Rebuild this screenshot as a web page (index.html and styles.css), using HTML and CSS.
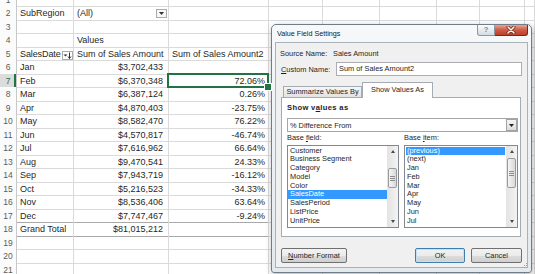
FILE: index.html
```html
<!DOCTYPE html>
<html lang="en">
<head>
    <meta charset="UTF-8">
    <meta name="viewport" content="width=device-width, initial-scale=1.0">
    <title>PivotTable - Value Field Settings</title>
    <link rel="stylesheet" href="styles.css">
</head>
<body>
    <div class="sheet" id="sheet"></div>

    <div class="dialog">
        <div class="titlebar">
            <span class="title">Value Field Settings</span>
            <div class="caption-btns">
                <span class="cap-help">?</span>
                <span class="cap-close">
                    <svg width="10" height="8" viewBox="0 0 10 8">
                        <path d="M2 1l6 6M8 1L2 7" stroke="#6b2418" stroke-width="3" stroke-linecap="round"/>
                        <path d="M2 1l6 6M8 1L2 7" stroke="#fff" stroke-width="1.5" stroke-linecap="round"/>
                    </svg>
                </span>
            </div>
        </div>

        <div class="client">
            <div class="src-row">
                <span class="src-label">Source Name:</span>
                <span>Sales Amount</span>
            </div>
            <div class="name-row">
                <label class="name-label"><u>C</u>ustom Name:</label>
                <div class="textbox">Sum of Sales Amount2</div>
            </div>

            <div class="tabs">
                <div class="tab">Summarize Values By</div>
                <div class="tab active">Show Values As</div>
            </div>
            <div class="panel">
                <div class="group-title">Show v<u>a</u>lues as</div>
                <div class="combo">
                    <span class="combo-text">% Difference From</span>
                    <span class="combo-btn">
                        <svg width="5" height="3" viewBox="0 0 5 3"><path d="M0 0h5L2.5 3z" fill="#222"/></svg>
                    </span>
                </div>

                <div class="lists">
                    <div class="field-col">
                        <div class="list-label">Base <u>f</u>ield:</div>
                        <div class="listbox">
                            <div class="items">
                                <div class="item">Customer</div>
                                <div class="item">Business Segment</div>
                                <div class="item">Category</div>
                                <div class="item">Model</div>
                                <div class="item">Color</div>
                                <div class="item sel">SalesDate</div>
                                <div class="item">SalesPeriod</div>
                                <div class="item">ListPrice</div>
                                <div class="item">UnitPrice</div>
                            </div>
                            <div class="vscroll">
                                <span class="arrow up"></span>
                                <span class="thumb field-thumb"></span>
                                <span class="arrow down"></span>
                            </div>
                        </div>
                    </div>
                    <div class="item-col">
                        <div class="list-label">Base <u>i</u>tem:</div>
                        <div class="listbox">
                            <div class="items">
                                <div class="item sel">(previous)</div>
                                <div class="item">(next)</div>
                                <div class="item">Jan</div>
                                <div class="item">Feb</div>
                                <div class="item">Mar</div>
                                <div class="item">Apr</div>
                                <div class="item">May</div>
                                <div class="item">Jun</div>
                                <div class="item">Jul</div>
                            </div>
                            <div class="vscroll">
                                <span class="arrow up"></span>
                                <span class="thumb item-thumb"></span>
                                <span class="arrow down"></span>
                            </div>
                        </div>
                    </div>
                </div>
            </div>

            <div class="buttons">
                <button class="btn numfmt"><u>N</u>umber Format</button>
                <button class="btn ok">OK</button>
                <button class="btn cancel">Cancel</button>
            </div>
        </div>

        <span class="grip">
            <svg width="7" height="7" viewBox="0 0 7 7" fill="#9aa3ad">
                <rect x="5" y="1" width="1" height="1"/>
                <rect x="3" y="3" width="1" height="1"/>
                <rect x="5" y="3" width="1" height="1"/>
                <rect x="1" y="5" width="1" height="1"/>
                <rect x="3" y="5" width="1" height="1"/>
                <rect x="5" y="5" width="1" height="1"/>
            </svg>
        </span>
    </div>

    <script src="script.js"></script>
</body>
</html>
```

FILE: styles.css
```css
* {
    margin: 0;
    padding: 0;
    box-sizing: border-box;
}

body {
    width: 535px;
    height: 274px;
    overflow: hidden;
    position: relative;
    background-color: white;
    font-family: "Liberation Sans", Arial, sans-serif;
}

/* worksheet */

.sheet {
    margin-top: -7.5px;
    font-size: 9px;
    color: #1f1f1f;
}

.row {
    display: grid;
    grid-template-columns: 17px 57px 95px 100px 54px 57px 57px 43px 45px 10px;
    height: 13.5px;
}

.rh {
    color: #5c5c5c;
    font-size: 8.5px;
    text-align: center;
    line-height: 11.5px;
    padding-top: 2px;
    background-color: #fbfbfb;
    border-right: 1px solid #c8c8c8;
    border-bottom: 1px solid #e2e2e2;
}

.rh.active {
    background-color: #dcdcdc;
    color: #217346;
    box-shadow: inset -2px 0 #217346;
}

.cell {
    position: relative;
    padding: 2px 3px 0;
    line-height: 11.5px;
    white-space: nowrap;
    overflow: hidden;
    border-right: 1px solid #dadada;
    border-bottom: 1px solid #dadada;
}

.cell.num {
    text-align: right;
}

.cell.cur {
    padding-right: 5px;
}

.cell.pivot-line {
    border-bottom-color: #a9a9a9;
}

.cell.filtered {
    letter-spacing: -0.1px;
}

.cell.selected {
    overflow: visible;
    z-index: 1;
}

.cell.selected::before {
    content: "";
    position: absolute;
    left: -2px;
    top: -1px;
    right: -1px;
    bottom: -1px;
    border: 2px solid #217346;
}

.cell.selected::after {
    content: "";
    position: absolute;
    right: -4px;
    bottom: -4px;
    width: 6px;
    height: 6px;
    background-color: #217346;
    border: 1px solid white;
}

.cell-btn {
    position: absolute;
    right: 1px;
    display: flex;
    align-items: center;
    justify-content: center;
    border: 1px solid #ababab;
    background-color: #f7f7f7;
}

.dropdown-btn {
    top: 3px;
    width: 11px;
    height: 9px;
}

.filter-btn {
    top: 4px;
    right: 0;
    width: 11px;
    height: 9px;
    background-color: white;
}

/* dialog window */

.dialog {
    position: absolute;
    left: 271px;
    top: 24px;
    width: 261px;
    height: 249px;
    padding: 0 3px 4px;
    border: 1px solid #6f7c89;
    border-radius: 5px 5px 3px 3px;
    background: linear-gradient(#f6f8fa, #e4e9ee);
    box-shadow: 1px 2px 6px rgba(0, 0, 0, 0.3);
    font-size: 7.4px;
    color: #1e1e1e;
}

.titlebar {
    display: flex;
    height: 17px;
}

.title {
    margin-left: 2px;
    padding-top: 4px;
    line-height: 10px;
    font-size: 7.2px;
    color: #1a1a1a;
}

.caption-btns {
    margin-left: auto;
    display: flex;
    height: 11px;
}

.cap-help {
    width: 18px;
    text-align: center;
    line-height: 10px;
    font-size: 7.5px;
    font-weight: bold;
    color: #7d8894;
    background: linear-gradient(#fafbfc, #d5dce4);
    border: 1px solid #8b97a3;
    border-top: none;
    border-radius: 0 0 0 3px;
}

.cap-close {
    width: 33px;
    display: flex;
    align-items: center;
    justify-content: center;
    background: linear-gradient(#e8a596, #cf5a45 50%, #b9402b);
    border: 1px solid #6d2c21;
    border-top: none;
    border-left: none;
    border-radius: 0 0 3px 0;
}

.client {
    height: 226px;
    border: 1px solid #a9b1ba;
    background-color: #f0f0f0;
}

.src-row,
.name-row {
    display: flex;
    align-items: center;
    height: 14px;
}

.src-row {
    margin-top: 3px;
    padding-left: 4px;
}

.src-label {
    width: 53px;
}

.name-row {
    margin-top: 2px;
    padding-left: 5px;
}

.name-label {
    width: 55px;
}

.textbox {
    width: 186px;
    height: 14px;
    padding-left: 2px;
    line-height: 12px;
    background-color: white;
    border: 1px solid #abadb3;
}

/* tabs */

.tabs {
    position: relative;
    z-index: 1;
    display: flex;
    align-items: flex-end;
    height: 15px;
    margin-top: 6px;
    padding-left: 7px;
}

.tab {
    width: 79px;
    height: 11px;
    line-height: 10px;
    text-align: center;
    white-space: nowrap;
    background: linear-gradient(#f6f6f6, #e2e2e2);
    border: 1px solid #a4abb3;
    border-bottom: none;
}

.tab.active {
    width: 71px;
    height: 16px;
    margin-bottom: -1px;
    padding-top: 2px;
    background: white;
}

.panel {
    margin-left: 5px;
    width: 240px;
    height: 140px;
    padding-left: 5px;
    background-color: white;
    border: 1px solid #a4abb3;
}

.group-title {
    margin-top: 5px;
    line-height: 10px;
    font-size: 7.6px;
    font-weight: bold;
    letter-spacing: 0.35px;
}

.combo {
    display: flex;
    align-items: center;
    width: 231px;
    height: 14px;
    margin-top: 5px;
    padding-left: 2px;
    background-color: white;
    border: 1px solid #a6a6a6;
}

.combo-text {
    flex: 1;
}

.combo-btn {
    width: 11px;
    height: 12px;
    display: flex;
    align-items: center;
    justify-content: center;
    background: linear-gradient(#f4f4f4, #dcdcdc);
    border: 1px solid #a3a3a3;
}

.lists {
    display: flex;
    gap: 5px;
    margin-top: 1px;
}

.field-col {
    width: 112px;
}

.item-col {
    width: 114px;
}

.list-label {
    line-height: 10px;
}

.listbox {
    display: flex;
    height: 83px;
    margin-top: 2px;
    background-color: white;
    border: 1px solid #828790;
}

.items {
    flex: 1;
    padding-top: 0.5px;
}

.item {
    height: 8.75px;
    line-height: 8.75px;
    padding-left: 2px;
    white-space: nowrap;
}

.item.sel {
    background-color: #3399ff;
    color: white;
}

.item-col .item.sel {
    margin: 0 1px;
    padding-left: 1px;
}

.vscroll {
    width: 11px;
    display: flex;
    flex-direction: column;
    align-items: center;
    background: linear-gradient(90deg, #e3e3e3, #f3f3f3);
}

.arrow {
    width: 11px;
    height: 11px;
    display: flex;
    align-items: center;
    justify-content: center;
}

.arrow::before {
    content: "";
    border-left: 2.5px solid transparent;
    border-right: 2.5px solid transparent;
}

.arrow.up::before {
    border-bottom: 3px solid #4a4a4a;
}

.arrow.down {
    margin-top: auto;
}

.arrow.down::before {
    border-top: 3px solid #4a4a4a;
}

.thumb {
    position: relative;
    width: 9px;
    background: linear-gradient(90deg, #f5f5f5, #d9d9d9);
    border: 1px solid #9a9a9a;
    border-radius: 2px;
}

.thumb::after {
    content: "";
    position: absolute;
    left: 1px;
    right: 1px;
    top: 50%;
    height: 5px;
    margin-top: -2.5px;
    background: repeating-linear-gradient(#8c8c8c 0 1px, transparent 1px 2px);
}

.field-thumb {
    margin-top: 11px;
    height: 20px;
}

.item-thumb {
    margin-top: 1px;
    height: 30px;
}

/* buttons */

.buttons {
    display: flex;
    height: 15px;
    margin-top: 11px;
    padding: 0 5px;
}

.btn {
    height: 15px;
    padding: 0;
    font: inherit;
    color: #1e1e1e;
    line-height: 13px;
    background: linear-gradient(#f2f2f2, #ebebeb 50%, #dddddd 51%, #cfcfcf);
    border: 1px solid #707070;
    border-radius: 2px;
}

.btn.numfmt {
    width: 66px;
}

.btn.ok {
    width: 50px;
    margin-left: auto;
    border-color: #3c7fb1;
    box-shadow: inset 0 0 0 1px #c0e2f5;
}

.btn.cancel {
    width: 51px;
    margin-left: 6px;
}

.grip {
    position: absolute;
    right: 3px;
    bottom: 3px;
    width: 7px;
    height: 7px;
    display: flex;
}
```

FILE: script.js
```js
const sheet = document.getElementById('sheet');

const months = [
    ['Jan', '$3,702,433', ''],
    ['Feb', '$6,370,348', '72.06%'],
    ['Mar', '$6,387,124', '0.26%'],
    ['Apr', '$4,870,403', '-23.75%'],
    ['May', '$8,582,470', '76.22%'],
    ['Jun', '$4,570,817', '-46.74%'],
    ['Jul', '$7,616,962', '66.64%'],
    ['Aug', '$9,470,541', '24.33%'],
    ['Sep', '$7,943,719', '-16.12%'],
    ['Oct', '$5,216,523', '-34.33%'],
    ['Nov', '$8,536,406', '63.64%'],
    ['Dec', '$7,747,467', '-9.24%']
];

const content = {
    2: [{ text: 'SubRegion' }, { text: '(All)', icon: 'dropdown' }],
    4: [null, { text: 'Values' }],
    5: [{ text: 'SalesDate', icon: 'filter' }, { text: 'Sum of Sales Amount' }, { text: 'Sum of Sales Amount2' }],
    18: [{ text: 'Grand Total' }, { text: '$81,015,212', num: true }]
};

months.forEach((m, i) => {
    content[6 + i] = [{ text: m[0] }, { text: m[1], num: true }, { text: m[2], num: true }];
});

const icons = {
    dropdown: '<span class="cell-btn dropdown-btn"><svg width="5" height="3" viewBox="0 0 5 3"><path d="M0 0h5L2.5 3z" fill="#333"/></svg></span>',
    filter: '<span class="cell-btn filter-btn"><svg width="9" height="7" viewBox="0 0 9 7">' +
        '<path d="M0.5 2.5h4L2.5 4.5z" fill="#333"/>' +
        '<path d="M6.5 0.5v6" stroke="#333"/>' +
        '<path d="M5 4.5l1.5 2 1.5-2" fill="none" stroke="#333"/></svg></span>'
};

for (let n = 1; n <= 21; n++) {
    const row = document.createElement('div');
    row.className = 'row';

    const head = document.createElement('div');
    head.className = n === 7 ? 'rh active' : 'rh';
    head.textContent = n;
    row.appendChild(head);

    const cells = content[n] || [];
    for (let c = 0; c < 9; c++) {
        const cell = document.createElement('div');
        cell.className = 'cell';
        const d = cells[c];
        if (d) {
            cell.textContent = d.text;
            if (d.num) cell.classList.add('num');
            if (d.num && c === 1) cell.classList.add('cur');
            if (d.icon === 'filter') cell.classList.add('filtered');
            if (d.icon) cell.insertAdjacentHTML('beforeend', icons[d.icon]);
        }
        if ((n === 17 || n === 18) && c < 3) cell.classList.add('pivot-line');
        if (n === 7 && c === 2) cell.classList.add('selected');
        row.appendChild(cell);
    }

    sheet.appendChild(row);
}
```
